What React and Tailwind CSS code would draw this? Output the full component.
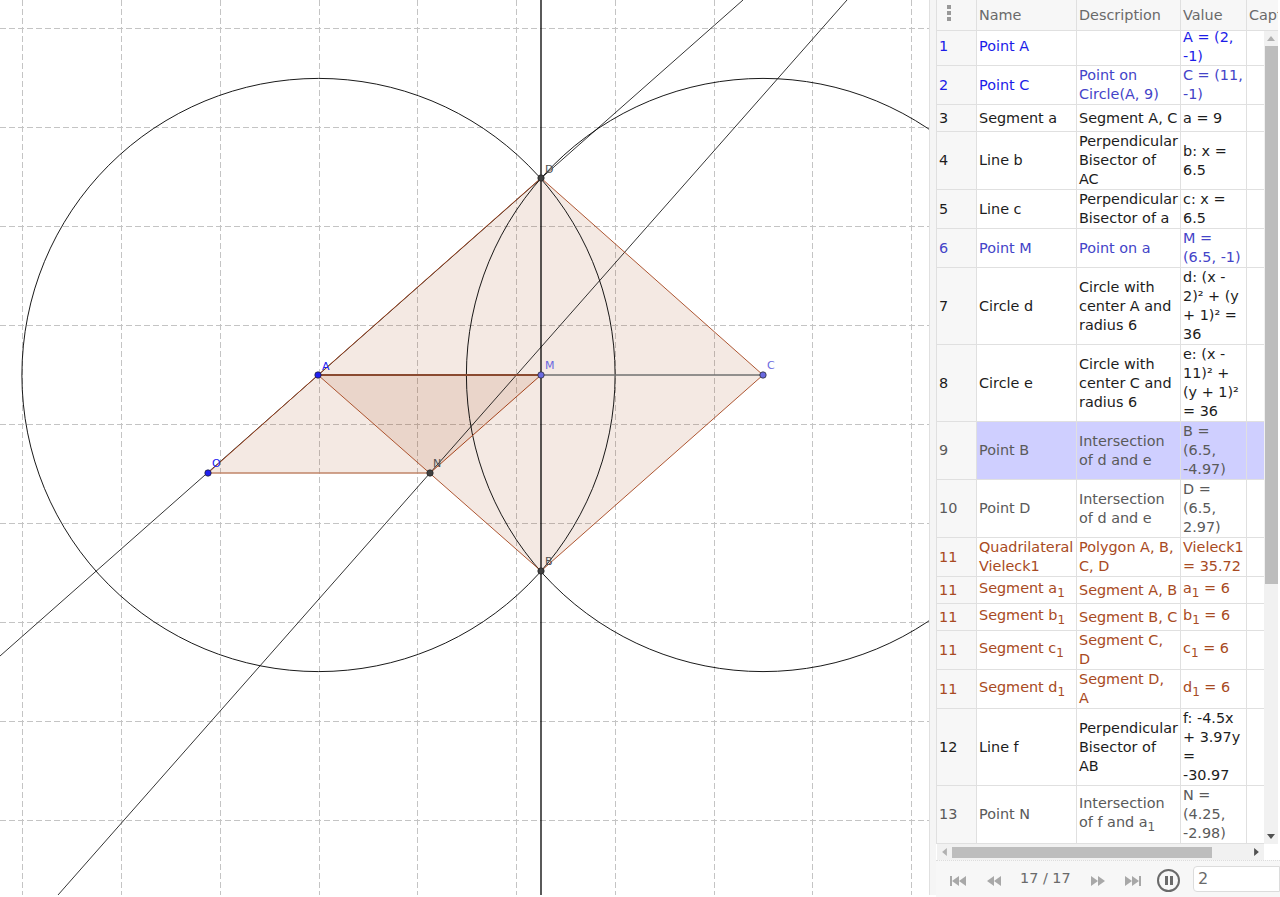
import React from 'react';

const BLUE = 'text-[#1c1ce8]';
const SOFT = 'text-[#4444c8]';
const DARK = 'text-[#1c1c1c]';
const GREY = 'text-[#5a5a5a]';
const BROWN = 'text-[#a84a22]';

const S = ({ children }) => <sub className="align-sub text-[12px] leading-[normal] static">{children}</sub>;

const rows = [
  { h: 'h-[35px]', up: 'pb-[4px]', nup: 'pb-[4px]', vup: 'pb-[2px]', no: '1', c: BLUE, name: 'Point A', desc: '', val: 'A = (2, -1)' },
  { h: 'h-[39px]', no: '2', c: BLUE, dc: SOFT, vc: SOFT, name: 'Point C', desc: 'Point on Circle(A, 9)', val: 'C = (11, -1)' },
  { h: 'h-[27px]', no: '3', c: DARK, name: 'Segment a', desc: 'Segment A, C', val: 'a = 9' },
  { h: 'h-[58px]', no: '4', c: DARK, name: 'Line b', desc: 'Perpendicular Bisector of AC', val: 'b: x = 6.5' },
  { h: 'h-[39px]', no: '5', c: DARK, name: 'Line c', desc: 'Perpendicular Bisector of a', val: 'c: x = 6.5' },
  { h: 'h-[39px]', no: '6', c: SOFT, name: 'Point M', desc: 'Point on a', val: 'M = (6.5, -1)' },
  { h: 'h-[77px]', no: '7', c: DARK, name: 'Circle d', desc: 'Circle with center A and radius 6', val: 'd: (x - 2)² + (y + 1)² = 36' },
  { h: 'h-[77px]', no: '8', c: DARK, name: 'Circle e', desc: 'Circle with center C and radius 6', val: 'e: (x - 11)² + (y + 1)² = 36' },
  { h: 'h-[58px]', no: '9', c: GREY, selected: true, name: 'Point B', desc: 'Intersection of d and e', val: 'B = (6.5, -4.97)' },
  { h: 'h-[58px]', no: '10', c: GREY, name: 'Point D', desc: 'Intersection of d and e', val: 'D = (6.5, 2.97)' },
  { h: 'h-[39px]', no: '11', c: BROWN, name: 'Quadrilateral Vieleck1', desc: 'Polygon A, B, C, D', val: 'Vieleck1 = 35.72' },
  { h: 'h-[27px]', up: 'pb-[2px]', vup: 'pb-[2px]', no: '11', c: BROWN, name: <>Segment a<S>1</S></>, desc: 'Segment A, B', val: <>a<S>1</S> = 6</> },
  { h: 'h-[27px]', up: 'pb-[2px]', vup: 'pb-[2px]', no: '11', c: BROWN, name: <>Segment b<S>1</S></>, desc: 'Segment B, C', val: <>b<S>1</S> = 6</> },
  { h: 'h-[39px]', up: 'pb-[2px]', vup: 'pb-[2px]', no: '11', c: BROWN, name: <>Segment c<S>1</S></>, desc: 'Segment C, D', val: <>c<S>1</S> = 6</> },
  { h: 'h-[39px]', up: 'pb-[2px]', vup: 'pb-[2px]', no: '11', c: BROWN, name: <>Segment d<S>1</S></>, desc: <>Segment D,<br />A</>, val: <>d<S>1</S> = 6</> },
  { h: 'h-[77px]', no: '12', c: DARK, name: 'Line f', desc: 'Perpendicular Bisector of AB', val: 'f: -4.5x + 3.97y = -30.97' },
  { h: 'h-[58px]', dup: 'pb-[2px]', no: '13', c: GREY, name: 'Point N', desc: <>Intersection of f and a<S>1</S></>, val: 'N = (4.25, -2.98)' },
];

const gridX = [22, 121, 220, 319, 417, 516, 615, 714, 812, 911];
const gridY = [28, 127, 226, 325, 424, 523, 622, 721, 820];

const points = [
  { x: 318, y: 375, fill: '#2020f0', label: 'A', lx: 322, ly: 370, lc: '#2020f0' },
  { x: 208, y: 473, fill: '#2020f0', label: 'O', lx: 212, ly: 467, lc: '#2020f0' },
  { x: 541, y: 375, fill: '#6a6ae0', label: 'M', lx: 545, ly: 369, lc: '#6a6ae0' },
  { x: 763, y: 375, fill: '#6a6ae0', label: 'C', lx: 767, ly: 369, lc: '#6a6ae0' },
  { x: 430, y: 473, fill: '#404040', label: 'N', lx: 433, ly: 467, lc: '#505050' },
  { x: 541, y: 178, fill: '#404040', label: 'D', lx: 545, ly: 173, lc: '#505050' },
  { x: 541, y: 571, fill: '#404040', label: 'B', lx: 545, ly: 565, lc: '#505050' },
];

function Construction() {
  return (
    <svg width="929" height="895" viewBox="0 0 929 895" className="block bg-white">
      {gridX.map((x) => (
        <line key={x} x1={x + 0.5} y1="0" x2={x + 0.5} y2="895" stroke="#c4c4c4" strokeWidth="1" strokeDasharray="6 3" />
      ))}
      {gridY.map((y) => (
        <line key={y} x1="0" y1={y + 0.5} x2="929" y2={y + 0.5} stroke="#c4c4c4" strokeWidth="1" strokeDasharray="6 3" />
      ))}
      <polygon points="318,375 541,571 763,375 541,178" fill="#993300" fillOpacity="0.11" />
      <polygon points="208,473 430,473 541,375 318,375" fill="#993300" fillOpacity="0.11" />
      <circle cx="318.5" cy="375" r="296.6" fill="none" stroke="#000" strokeWidth="0.9" />
      <circle cx="763" cy="375" r="296.6" fill="none" stroke="#000" strokeWidth="0.9" />
      <line x1="541" y1="0" x2="541" y2="895" stroke="#000" strokeWidth="1.3" />
      <line x1="0" y1="656" x2="743" y2="0" stroke="#000" strokeWidth="0.8" />
      <line x1="58" y1="895" x2="847" y2="0" stroke="#000" strokeWidth="0.8" />
      <line x1="541" y1="375" x2="763" y2="375" stroke="#707070" strokeWidth="1.5" />
      <line x1="318" y1="375" x2="541" y2="375" stroke="#8a4a30" strokeWidth="1.8" />
      <polyline points="318,375 541,571 763,375 541,178 318,375" fill="none" stroke="#a5441c" strokeWidth="0.9" />
      <line x1="208" y1="473" x2="430" y2="473" stroke="#c08468" strokeWidth="1.5" />
      <line x1="430" y1="473" x2="541" y2="375" stroke="#a5441c" strokeWidth="1" />
      <line x1="208" y1="473" x2="318" y2="375" stroke="#a5441c" strokeWidth="0.9" />
      {points.map((p) => (
        <g key={p.label}>
          <circle cx={p.x} cy={p.y} r="3.2" fill={p.fill} stroke="#222" strokeWidth="0.7" />
          <text x={p.lx} y={p.ly} fontSize="11" fill={p.lc} fontFamily="'DejaVu Sans', sans-serif">{p.label}</text>
        </g>
      ))}
    </svg>
  );
}

function Cell({ w, children, className = '' }) {
  return <div className={`${w} shrink-0 flex items-center overflow-hidden border-r border-[#e0e0e0] pl-[2px] pr-[1.5px] ${className}`}><div className="min-w-0">{children}</div></div>;
}

function Tri({ dir, color }) {
  const pts = { up: '0,6 5,0 10,6', down: '0,0 5,6 10,0', left: '6,0 0,5 6,10', right: '0,0 6,5 0,10' };
  const wide = dir === 'up' || dir === 'down';
  return (
    <svg width={wide ? 8 : 5} height={wide ? 5 : 8} viewBox={wide ? '0 0 10 6' : '0 0 6 10'} className="block">
      <polygon points={pts[dir]} fill={color} />
    </svg>
  );
}

function SkipIcon({ flip, double }) {
  return (
    <svg width="18" height="12" viewBox="0 0 18 12" className={flip ? 'block -scale-x-100' : 'block'}>
      <polygon points="1,1 8,6 1,11" fill="#a8a8a8" />
      <polygon points="8,1 15,6 8,11" fill="#a8a8a8" />
      {double && <rect x="15" y="1" width="2" height="10" fill="#a8a8a8" />}
    </svg>
  );
}

export default function App() {
  return (
    <div className="flex w-[1280px] h-[897px] overflow-hidden bg-white text-[14.4px] leading-[19px] font-['DejaVu_Sans',sans-serif]">
      <div className="w-[929px] shrink-0">
        <Construction />
      </div>
      <div className="w-[7px] h-[895px] shrink-0 bg-[#f5f5f5] border-l border-[#e0e0e0]" />
      <div className="w-[344px] shrink-0 flex flex-col">
        <div className="w-[342px] border-l border-[#e0e0e0]">
          {/* header */}
          <div className="flex h-[31px] bg-[#f7f7f7] border-b border-[#e0e0e0] text-[#6a6a6a] overflow-hidden">
            <div className="w-[40px] shrink-0 border-r border-[#e0e0e0] flex flex-col items-start gap-[2px] pt-[5px] pl-[10px]">
              <span className="w-[4px] h-[4px] bg-[#999]" />
              <span className="w-[4px] h-[4px] bg-[#999]" />
              <span className="w-[4px] h-[4px] bg-[#999]" />
            </div>
            <Cell w="w-[100px]">Name</Cell>
            <Cell w="w-[104px]">Description</Cell>
            <Cell w="w-[66px]">Value</Cell>
            <div className="flex items-center pl-[2px] whitespace-nowrap">Caption</div>
          </div>
          <div className="flex h-[813px]">
            <div className="w-[327px] shrink-0">
              {rows.map((r, i) => (
                <div key={i} className={`flex ${r.h} border-b border-[#e0e0e0] ${r.c}`}>
                  <div className={`w-[40px] shrink-0 flex items-center pl-[2px] bg-[#f7f7f7] border-r border-[#e0e0e0] ${r.nup || ''}`}>{r.no}</div>
                  <Cell w="w-[100px]" className={`${r.selected ? 'bg-[#cfcfff]' : ''} ${r.up || ''}`}>{r.name}</Cell>
                  <Cell w="w-[104px]" className={`${r.selected ? 'bg-[#cfcfff]' : ''} ${r.dc || ''} ${r.dup || ''}`}>{r.desc}</Cell>
                  <Cell w="w-[66px]" className={`${r.selected ? 'bg-[#cfcfff]' : ''} ${r.vc || ''} ${r.vup || ''}`}>{r.val}</Cell>
                  <div className={`grow ${r.selected ? 'bg-[#cfcfff]' : ''}`} />
                </div>
              ))}
            </div>
            {/* vertical scrollbar */}
            <div className="w-[14px] shrink-0 bg-[#f1f1f1] flex flex-col items-center">
              <div className="h-[15px] flex items-center justify-center"><Tri dir="up" color="#b0b0b0" /></div>
              <div className="w-[13px] h-[538px] bg-[#bdbdbd]" />
              <div className="grow" />
              <div className="h-[15px] flex items-center justify-center"><Tri dir="down" color="#505050" /></div>
            </div>
          </div>
        </div>
        {/* horizontal scrollbar */}
        <div className="ml-px w-[327px] h-[16px] bg-[#f1f1f1] flex items-center">
          <div className="w-[15px] flex justify-center"><Tri dir="left" color="#b0b0b0" /></div>
          <div className="w-[260px] h-[11px] bg-[#bdbdbd]" />
          <div className="grow" />
          <div className="w-[15px] flex justify-center"><Tri dir="right" color="#505050" /></div>
        </div>
        {/* playback bar */}
        <div className="grow flex items-center bg-[#f7f7f7] border-t border-dotted border-[#dddddd] pl-[13px] pt-[3px] text-[#6a6a6a]">
          <SkipIcon flip double />
          <div className="w-[17px]" />
          <SkipIcon flip />
          <span className="ml-[18px] w-[50px] whitespace-nowrap -mt-[4px]">17 / 17</span>
          <div className="w-[20px]" />
          <SkipIcon />
          <div className="w-[16px]" />
          <SkipIcon double />
          <div className="ml-[15px] w-[23px] h-[23px] shrink-0 rounded-full border-2 border-[#6a6a6a] flex items-center justify-center gap-[2px]">
            <span className="w-[3px] h-[9px] bg-[#6a6a6a]" />
            <span className="w-[3px] h-[9px] bg-[#6a6a6a]" />
          </div>
          <div className="ml-[13px] grow h-[26px] bg-white border border-[#dcdcdc] rounded-l-[4px] pl-[4px] flex items-center -mt-[4px] text-[16px]">2</div>
        </div>
      </div>
    </div>
  );
}
